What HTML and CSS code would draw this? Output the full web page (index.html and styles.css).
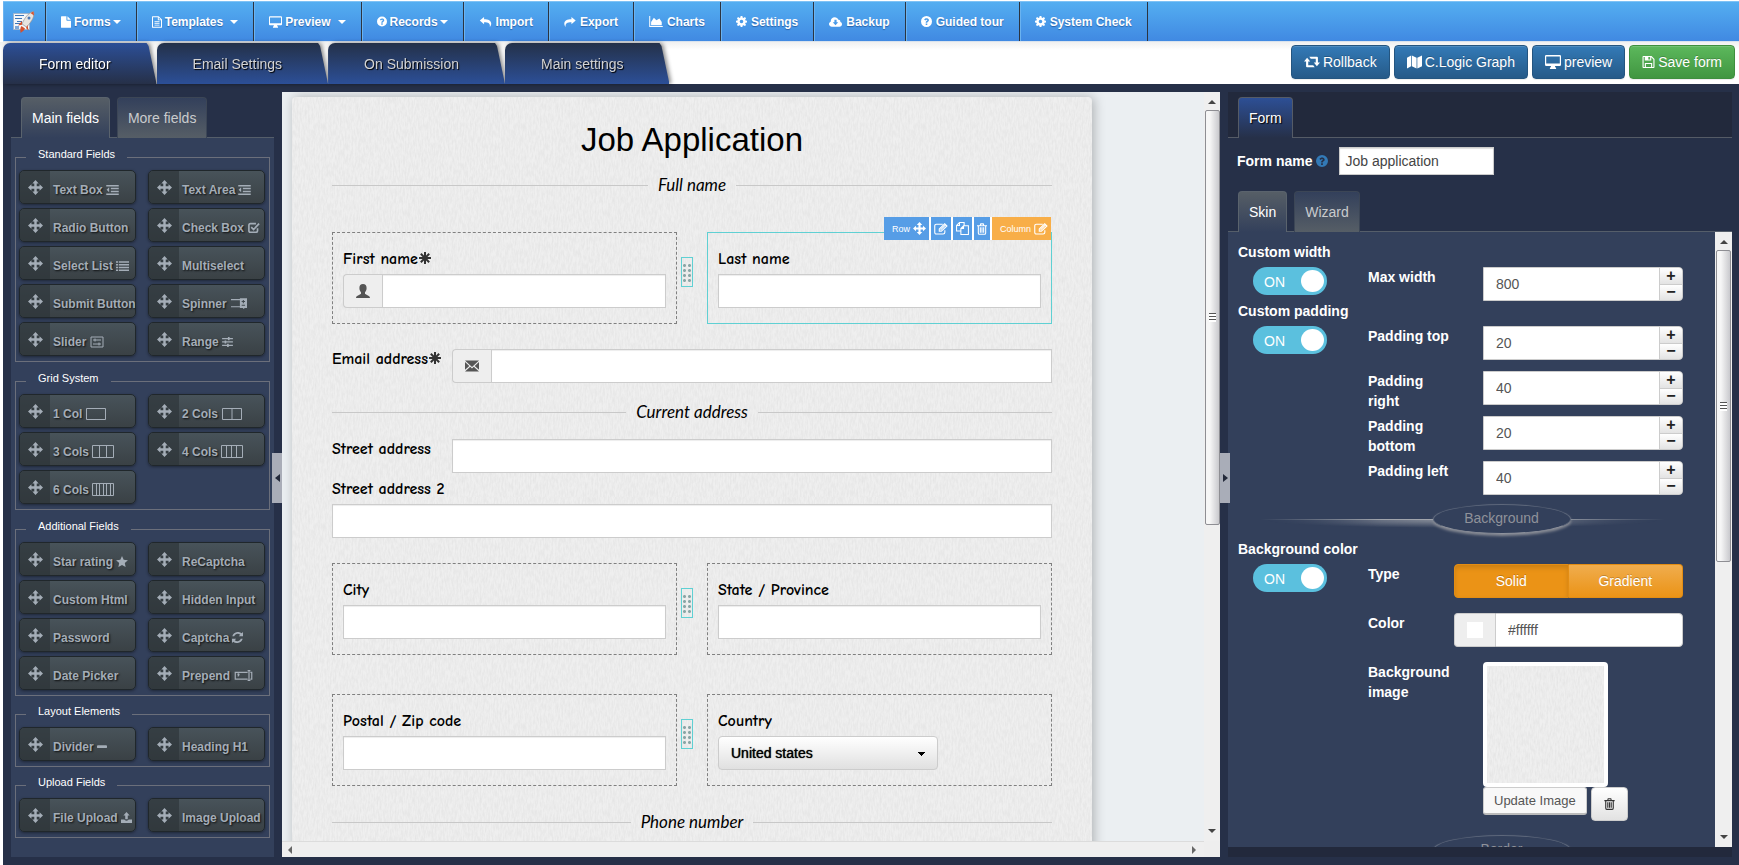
FILE: index.html
```html
<!DOCTYPE html>
<html lang="en">
<head>
<meta charset="utf-8">
<title>Form editor</title>
<link rel="stylesheet" href="styles.css">
</head>
<body>
<svg class="sprite" aria-hidden="true">
  <symbol id="move" viewBox="0 0 16 16"><path d="M8 0l3.400 3.700H9.300v3h3V4.600L16 8l-3.700 3.400V9.300h-3v3h2.100L8 16l-3.400-3.700h2.100v-3h-3v2.100L0 8l3.700-3.400v2.100h3v-3H4.600z"/></symbol>
  <symbol id="file" viewBox="0 0 12 14"><path d="M0 .8Q0 0 .8 0H6.500v4.700q0 .8.8.8H12v7.700q0 .8-.8.8H.8Q0 14 0 13.200zM7.700 0L12 4.400H7.700z"/></symbol>
  <symbol id="filetext" viewBox="0 0 12 14"><path fill-rule="evenodd" d="M.8 0H8l4 4v9.200q0 .8-.8.8H.8Q0 14 0 13.200V.8Q0 0 .8 0zM1.200 1.200v11.600h9.600V5H7V1.200zM8.100 1.500V4h2.400zM3 6.200h6v1H3zm0 2h6v1H3zm0 2h6v1H3z"/></symbol>
  <symbol id="desktop" viewBox="0 0 16 14"><path fill-rule="evenodd" d="M1.200 0h13.600Q16 0 16 1.200v8.600Q16 11 14.800 11H10q0 1 .7 1.500.8.500.3 1.500H5q-.5-1 .3-1.500Q6 12 6 11H1.200Q0 11 0 9.800V1.200Q0 0 1.200 0zM1.200 1.400v7.200h13.600V1.400z"/></symbol>
  <symbol id="question" viewBox="0 0 14 14"><path fill-rule="evenodd" d="M7 0a7 7 0 1 1 0 14A7 7 0 0 1 7 0zM4 4.600l1.500 1.100C6.100 4.900 6.500 4.700 7 4.700c1.100 0 1.400.9.500 1.500C6.500 6.800 6 7.300 6 8.700h2c0-.7.2-.9.900-1.300C11.300 5.900 10 2.800 7.100 2.800 5.800 2.800 4.700 3.400 4 4.600zM6 9.600v2h2v-2z"/></symbol>
  <symbol id="reply" viewBox="0 0 16 14"><path d="M0 5L6 0v3c6 0 10 2 10 6.500 0 1.600-.8 3.300-2 4.500C15 9 12 7.200 6 7.200V10z"/></symbol>
  <symbol id="share" viewBox="0 0 16 14"><path d="M16 5l-6-5v3C4 3 0 5 0 9.500c0 1.600.8 3.300 2 4.500C1 9 4 7.200 10 7.200V10z"/></symbol>
  <symbol id="chart" viewBox="0 0 16 13"><path d="M0 0h1.200v11.800H16V13H0zM2.200 10.800V7L5.500 2l3 3L12 3l2.800 4v3.800z"/></symbol>
  <symbol id="cog" viewBox="0 0 14 14"><path fill-rule="evenodd" d="M5.900 0h2.200l.4 1.900 1.100.5L11.300 1.300l1.500 1.500-1.100 1.700.4 1.100 1.900.4v2.200l-1.900.4-.4 1.100 1.100 1.600-1.500 1.500-1.700-1.100-1.100.5L8.100 14H5.900l-.4-1.800-1.100-.5-1.700 1.100-1.500-1.500 1.100-1.600-.4-1.100L0 8.200V6l1.900-.4.400-1.100L1.200 2.800l1.500-1.500 1.700 1.100 1.100-.5zM7 4.700a2.300 2.300 0 1 0 0 4.600 2.300 2.300 0 0 0 0-4.600z"/></symbol>
  <symbol id="cloud" viewBox="0 0 18 13"><path fill-rule="evenodd" d="M4 13C1.500 13 0 11.400 0 9.400 0 7.800 1 6.600 2.400 6.100 2.200 2.500 4.700 0 8 0c2.300 0 4.200 1.300 5 3.300 2-.3 3.200 1.400 2.700 3.100C17.200 6.900 18 8 18 9.500c0 2-1.500 3.500-3.500 3.500zM7.500 3.500V7H5.200L9 11l3.800-4h-2.300V3.500z"/></symbol>
  <symbol id="retweet" viewBox="0 0 17 12"><path d="M3.300 1.500L6.600 5.500H4.500v4h5.300l1.600 2H3.200q-1 0-1-1v-5H0zM13.700 10.500l-3.300-4h2.100v-4H7.200l-1.600-2h8.200q1 0 1 1v5H17z"/></symbol>
  <symbol id="map" viewBox="0 0 16 14"><path d="M0 2.500L4.400 0v11.500L0 14zM5.200 0l5 2.500V14l-5-2.500zM11 2.500L16 0v11.500L11 14z"/></symbol>
  <symbol id="save" viewBox="0 0 13 13"><path fill-rule="evenodd" d="M1 0h8.800L13 3.200V12q0 1-1 1H1q-1 0-1-1V1q0-1 1-1zM1.200 1.200v10.600H2.500V7.500h8v4.300h1.300v-8L9.500 1.400V5h-7V1.200zM6.300 1.200v2.600h2V1.200zM3.700 8.700v3.100h5.600V8.700z"/></symbol>
  <symbol id="indent" viewBox="0 0 15 12"><path d="M0 0h15v1.800H0zM5.500 3.400H15v1.800H5.500zM5.500 6.800H15v1.800H5.500zM0 10.200h15V12H0zM3.500 2.800v6L.4 5.800z"/></symbol>
  <symbol id="check" viewBox="0 0 15 14"><path fill="none" stroke="currentColor" stroke-width="2.100" d="M12 8v3q0 2-2 2H3q-2 0-2-2V4q0-2 2-2h7M4 6.500l3 3 7-7.500"/></symbol>
  <symbol id="list" viewBox="0 0 16 12"><path d="M0 0h2.500v1.900H0zm3.500 0H16v1.900H3.500zM0 3.400h2.500v1.900H0zm3.500 0H16v1.900H3.500zM0 6.800h2.500v1.900H0zm3.500 0H16v1.900H3.500zM0 10.200h2.500V12H0zm3.500 0H16V12H3.500z"/></symbol>
  <symbol id="spin" viewBox="0 0 18 12"><path d="M0 1h11v1.300H0zM0 9h11v1.300H0z"/><path fill-rule="evenodd" d="M10 0h8v11h-3v1h-1.500v-1H10zm3.300 2v1.300H12v1h1.300v1.300h1.200V4.300h1.300v-1h-1.300V2zM12 7.500v1h3.800v-1z"/></symbol>
  <symbol id="slide" viewBox="0 0 14 12"><path fill="none" stroke="currentColor" d="M1 1h12v10H1zM3 4h8M3 8h8M5 2.500v3M9 6.500v3"/></symbol>
  <symbol id="sliders" viewBox="0 0 13 12"><path d="M0 1.100h13v1.500H0zM0 5.200h13v1.500H0zM0 9.300h13v1.500H0zM7 0h2v3.800H7zM3 4.100h2v3.800H3zM6 8.200h2V12H6z"/></symbol>
  <symbol id="c1" viewBox="0 0 20 12"><path fill="none" stroke="currentColor" d="M.5.500h19v11H.5z"/></symbol>
  <symbol id="c2" viewBox="0 0 20 12"><path fill="none" stroke="currentColor" d="M.5.500h19v11H.5zM10 0v12"/></symbol>
  <symbol id="c3" viewBox="0 0 22 13"><path fill="none" stroke="currentColor" d="M.5.500h21v12H.5zM7.500 0v13M14.500 0v13"/></symbol>
  <symbol id="c4" viewBox="0 0 22 13"><path fill="none" stroke="currentColor" d="M.5.500h21v12H.5zM5.500 0v13M10.500 0v13M15.500 0v13"/></symbol>
  <symbol id="c6" viewBox="0 0 22 13"><path fill="none" stroke="currentColor" d="M.5.500h21v12H.5zM4.500 0v13M7.500 0v13M11.500 0v13M14.500 0v13M18.500 0v13"/></symbol>
  <symbol id="star" viewBox="0 0 14 13"><path d="M7 0l2 4.500 5 .5-3.700 3.300L11.300 13 7 10.500 2.700 13l1-4.700L0 5l5-.5z"/></symbol>
  <symbol id="refresh" viewBox="0 0 14 14"><path d="M12.300 1.700L14 0v5.400H8.600l1.900-1.900C7.600 1 4 2.200 2.800 5.400H.4C1.800 0 8.400-1.700 12.300 1.700zM1.700 12.300L0 14V8.600h5.400l-1.900 1.900c2.900 2.500 6.500 1.300 7.700-1.900h2.400c-1.400 5.400-8 7.100-11.900 3.700z"/></symbol>
  <symbol id="prep" viewBox="0 0 20 12"><path fill="none" stroke="currentColor" stroke-width="1.300" d="M14.500 2.500H1v7.500h13.500M17.500 2.500H19v7.500h-1.500M16 1v10.500M14.500.700h3M14.500 11.300h3M3.500 5q1-1.300 1.600-.2.200.7-.9 1.500v.7"/></symbol>
  <symbol id="minus" viewBox="0 0 11 12"><rect y="4.500" width="11" height="3.200" rx="1"/></symbol>
  <symbol id="upload" viewBox="0 0 13 13"><path d="M6.500 0l3.700 4H8v4.500H5V4H2.800zM0 9h4q.3 1.200 2.500 1.200T9 9h4v4H0z"/></symbol>
  <symbol id="edit" viewBox="0 0 16 14"><path fill="none" stroke="currentColor" stroke-width="1.300" d="M12.500 8.500v2.300q0 2-2 2H2.700q-2 0-2-2V3.500q0-2 2-2H10M6 9.500V7l6.300-6 2.600 2.500L8.500 9.500zM7.500 8L13 2.500"/></symbol>
  <symbol id="copy" viewBox="0 0 16 16"><path fill="none" stroke="currentColor" stroke-width="1.300" d="M10 4V.7H4.300L.7 4.300V11H6M4.300.7v3.600H.7M9.300 4.700h6v10.600H6V8zM9.300 4.700V8H6"/></symbol>
  <symbol id="trash" viewBox="0 0 12 14"><path fill="none" stroke="currentColor" stroke-width="1.300" d="M0 3h12M1.600 3v8.700q0 1.600 1.200 1.600h6.400q1.200 0 1.200-1.600V3M3.800 3l.7-2.200h3L8.200 3M4 5v6.500M6 5v6.500M8 5v6.500"/></symbol>
  <symbol id="user" viewBox="0 0 14 14"><path d="M7 0c2.400 0 3.600 1.400 3.600 4 0 2-.8 3.500-1.600 4.300v1.400c0 .8 5 1.500 5 4.300H0c0-2.800 5-3.500 5-4.300V8.300C4.200 7.500 3.400 6 3.400 4 3.400 1.400 4.600 0 7 0z"/></symbol>
  <symbol id="mail" viewBox="0 0 14 11"><path d="M0 0h14L7 6.500zM0 1.400L4.300 5.400 0 9.300zM14 1.400v7.900L9.700 5.400zM0 11l5.200-4.800L7 7.900l1.800-1.700L14 11z"/></symbol>
  <symbol id="aster" viewBox="0 0 12 12"><path stroke="currentColor" stroke-width="2" d="M6 0v12M0 6h12M1.800 1.800l8.400 8.400M10.200 1.800l-8.400 8.400"/></symbol>
</svg>

<nav class="topbar">
  <a class="brand" href="#" aria-label="Home">
    <svg width="22" height="22" viewBox="0 0 22 22"><path fill="#f4f6f8" stroke="#9fb4cc" d="M.5 2.500h16v16H.5z"/><path stroke="#3d76b8" d="M2 4.500h9M2 7.500h7M4 10.500h5M2 12.500h6"/><path fill="#7da7d8" d="M2 15h4v3H2z"/><path fill="#e8e4e0" stroke="#8d8f96" stroke-width=".7" d="M20.500.500c1.500 4-1 9.500-7 15.500L9 13C11.500 7 15.500 1.500 20.500.5z"/><path fill="#d5502c" d="M20.500.5l.5 4-3.500-2.500zM9 10l-4 4.500 4-.8zM14.500 14l1 5.500-2.500-2.500zM8.500 15l3.500 2.500c-.5 2-3 3-4.500 4.500.3-2-1-4 1-7z"/><circle cx="16" cy="7" r="1.500" fill="#4c78b4"/></svg>
  </a>
  <a class="drop" href="#"><svg width="10" height="12"><use href="#file"/></svg>Forms<i class="caret"></i></a>
  <a class="drop" href="#"><svg width="10" height="12"><use href="#filetext"/></svg>Templates<i class="caret far"></i></a>
  <a class="drop" href="#"><svg width="13" height="12"><use href="#desktop"/></svg>Preview<i class="caret far"></i></a>
  <a class="drop" href="#"><svg width="10" height="11"><use href="#question"/></svg>Records<i class="caret"></i></a>
  <a href="#"><svg width="13" height="10"><use href="#reply"/></svg>Import</a>
  <a href="#"><svg width="12" height="10"><use href="#share"/></svg>Export</a>
  <a href="#"><svg width="14" height="11"><use href="#chart"/></svg>Charts</a>
  <a href="#"><svg width="11" height="11"><use href="#cog"/></svg>Settings</a>
  <a href="#"><svg width="13" height="10"><use href="#cloud"/></svg>Backup</a>
  <a href="#"><svg width="11" height="11"><use href="#question"/></svg>Guided tour</a>
  <a href="#"><svg width="11" height="11"><use href="#cog"/></svg>System Check</a>
</nav>

<header class="tabbar">
  <div class="tabs">
    <div class="tabwrap"><button class="tab active">Form editor</button></div>
    <div class="tabwrap"><button class="tab">Email Settings</button></div>
    <div class="tabwrap"><button class="tab">On Submission</button></div>
    <div class="tabwrap"><button class="tab">Main settings</button></div>
  </div>
  <div class="actions">
    <button class="btn"><svg width="16" height="12"><use href="#retweet"/></svg>Rollback</button>
    <button class="btn"><svg width="15" height="14"><use href="#map"/></svg>C.Logic Graph</button>
    <button class="btn"><svg width="16" height="14"><use href="#desktop"/></svg>preview</button>
    <button class="btn green"><svg width="13" height="12"><use href="#save"/></svg>Save form</button>
  </div>
</header>

<main class="work">
  <aside class="palette">
    <div class="ptabs">
      <button class="ptab active">Main fields</button>
      <button class="ptab">More fields</button>
    </div>
    <div class="pbody">
      <fieldset><legend>Standard Fields</legend>
        <div class="tools">
          <button class="tool"><span class="grip"><svg><use href="#move"/></svg></span><span class="name">Text Box <svg width="13" height="10"><use href="#indent"/></svg></span></button>
          <button class="tool"><span class="grip"><svg><use href="#move"/></svg></span><span class="name">Text Area <svg width="13" height="10"><use href="#indent"/></svg></span></button>
          <button class="tool"><span class="grip"><svg><use href="#move"/></svg></span><span class="name">Radio Button</span></button>
          <button class="tool"><span class="grip"><svg><use href="#move"/></svg></span><span class="name">Check Box<svg class="snug" width="12" height="11"><use href="#check"/></svg></span></button>
          <button class="tool"><span class="grip"><svg><use href="#move"/></svg></span><span class="name">Select List <svg width="13" height="10"><use href="#list"/></svg></span></button>
          <button class="tool"><span class="grip"><svg><use href="#move"/></svg></span><span class="name">Multiselect</span></button>
          <button class="tool"><span class="grip"><svg><use href="#move"/></svg></span><span class="name">Submit Button</span></button>
          <button class="tool"><span class="grip"><svg><use href="#move"/></svg></span><span class="name">Spinner <svg class="snug" width="16" height="11"><use href="#spin"/></svg></span></button>
          <button class="tool"><span class="grip"><svg><use href="#move"/></svg></span><span class="name">Slider <svg class="snug" width="14" height="12"><use href="#slide"/></svg></span></button>
          <button class="tool"><span class="grip"><svg><use href="#move"/></svg></span><span class="name">Range <svg width="11" height="10"><use href="#sliders"/></svg></span></button>
        </div>
      </fieldset>
      <fieldset><legend>Grid System</legend>
        <div class="tools">
          <button class="tool"><span class="grip"><svg><use href="#move"/></svg></span><span class="name">1 Col <svg class="snug" width="20" height="12"><use href="#c1"/></svg></span></button>
          <button class="tool"><span class="grip"><svg><use href="#move"/></svg></span><span class="name">2 Cols <svg class="snug" width="20" height="12"><use href="#c2"/></svg></span></button>
          <button class="tool"><span class="grip"><svg><use href="#move"/></svg></span><span class="name">3 Cols <svg width="22" height="13"><use href="#c3"/></svg></span></button>
          <button class="tool"><span class="grip"><svg><use href="#move"/></svg></span><span class="name">4 Cols <svg width="22" height="13"><use href="#c4"/></svg></span></button>
          <button class="tool"><span class="grip"><svg><use href="#move"/></svg></span><span class="name">6 Cols <svg width="22" height="13"><use href="#c6"/></svg></span></button>
        </div>
      </fieldset>
      <fieldset><legend>Additional Fields</legend>
        <div class="tools">
          <button class="tool"><span class="grip"><svg><use href="#move"/></svg></span><span class="name">Star rating <svg width="12" height="11"><use href="#star"/></svg></span></button>
          <button class="tool"><span class="grip"><svg><use href="#move"/></svg></span><span class="name">ReCaptcha</span></button>
          <button class="tool"><span class="grip"><svg><use href="#move"/></svg></span><span class="name">Custom Html</span></button>
          <button class="tool"><span class="grip"><svg><use href="#move"/></svg></span><span class="name">Hidden Input</span></button>
          <button class="tool"><span class="grip"><svg><use href="#move"/></svg></span><span class="name">Password</span></button>
          <button class="tool"><span class="grip"><svg><use href="#move"/></svg></span><span class="name">Captcha <svg width="11" height="11"><use href="#refresh"/></svg></span></button>
          <button class="tool"><span class="grip"><svg><use href="#move"/></svg></span><span class="name">Date Picker</span></button>
          <button class="tool"><span class="grip"><svg><use href="#move"/></svg></span><span class="name">Prepend <svg class="snug" width="19" height="11"><use href="#prep"/></svg></span></button>
        </div>
      </fieldset>
      <fieldset><legend>Layout Elements</legend>
        <div class="tools">
          <button class="tool"><span class="grip"><svg><use href="#move"/></svg></span><span class="name">Divider <svg width="10" height="11"><use href="#minus"/></svg></span></button>
          <button class="tool"><span class="grip"><svg><use href="#move"/></svg></span><span class="name">Heading H1</span></button>
        </div>
      </fieldset>
      <fieldset><legend>Upload Fields</legend>
        <div class="tools">
          <button class="tool"><span class="grip"><svg><use href="#move"/></svg></span><span class="name">File Upload <svg width="11" height="11"><use href="#upload"/></svg></span></button>
          <button class="tool"><span class="grip"><svg><use href="#move"/></svg></span><span class="name">Image Upload</span></button>
        </div>
      </fieldset>
    </div>
    <button class="fold left" aria-label="Collapse palette"></button>
  </aside>

  <section class="canvas">
    <div class="stage">
      <form class="page">
        <h1>Job Application</h1>
        <h2 class="rule first">Full name</h2>
        <div class="pair">
          <div class="cell">
            <label for="fn">First name<svg class="req" width="12" height="12"><use href="#aster"/></svg></label>
            <div class="group"><span class="addon"><svg width="14" height="14"><use href="#user"/></svg></span><input id="fn" type="text"></div>
          </div>
          <span class="dots"><i></i></span>
          <div class="cell chosen">
            <div class="rowtools">
              <button type="button">Row <svg width="13" height="13"><use href="#move"/></svg></button>
              <button type="button" aria-label="Edit row"><svg width="14" height="12"><use href="#edit"/></svg></button>
              <button type="button" aria-label="Copy row"><svg width="13" height="13"><use href="#copy"/></svg></button>
              <button type="button" aria-label="Delete row"><svg width="10" height="12"><use href="#trash"/></svg></button>
              <button type="button" class="orange">Column <svg width="14" height="12"><use href="#edit"/></svg></button>
            </div>
            <label for="ln">Last name</label>
            <input id="ln" type="text">
          </div>
        </div>
        <div class="line">
          <label for="em">Email address<svg class="req" width="12" height="12"><use href="#aster"/></svg></label>
          <div class="group"><span class="addon"><svg width="14" height="12"><use href="#mail"/></svg></span><input id="em" type="text"></div>
        </div>
        <h2 class="rule">Current address</h2>
        <div class="line">
          <label for="s1">Street address</label>
          <input id="s1" type="text">
        </div>
        <div class="stack">
          <label for="s2">Street address 2</label>
          <input id="s2" type="text">
        </div>
        <div class="pair">
          <div class="cell"><label for="ct">City</label><input id="ct" type="text"></div>
          <span class="dots"><i></i></span>
          <div class="cell"><label for="st">State / Province</label><input id="st" type="text"></div>
        </div>
        <div class="pair">
          <div class="cell"><label for="zp">Postal / Zip code</label><input id="zp" type="text"></div>
          <span class="dots"><i></i></span>
          <div class="cell"><label for="co">Country</label><select id="co"><option>United states</option></select></div>
        </div>
        <h2 class="rule last">Phone number</h2>
      </form>
    </div>
    <div class="vbar"><i class="up"></i><i class="thumb"></i><i class="down"></i></div>
    <div class="hbar"><i class="lt"></i><i class="rt"></i></div>
    <div class="corner"></div>
  </section>

  <aside class="props">
    <button class="fold right" aria-label="Collapse properties"></button>
    <div class="ftabs"><button class="ftab">Form</button></div>
    <div class="fname"><label for="nm">Form name <svg width="12" height="12"><use href="#question"/></svg></label><input id="nm" type="text" value="Job application"></div>
    <div class="ptabs two">
      <button class="ptab active">Skin</button>
      <button class="ptab">Wizard</button>
    </div>
    <div class="skin">
      <div class="skinbody">
        <section class="opt">
          <h3 id="cw">Custom width</h3>
          <label class="switch"><input type="checkbox" checked aria-labelledby="cw"><span>ON</span></label>
          <div class="rows">
            <div class="row"><label for="mw">Max width</label><div class="num"><input id="mw" type="text" value="800"><button aria-label="Increase">+</button><button aria-label="Decrease">−</button></div></div>
          </div>
        </section>
        <section class="opt">
          <h3 id="cp">Custom padding</h3>
          <label class="switch"><input type="checkbox" checked aria-labelledby="cp"><span>ON</span></label>
          <div class="rows tight">
            <div class="row"><label for="pt">Padding top</label><div class="num"><input id="pt" type="text" value="20"><button aria-label="Increase">+</button><button aria-label="Decrease">−</button></div></div>
            <div class="row"><label for="pr">Padding right</label><div class="num"><input id="pr" type="text" value="40"><button aria-label="Increase">+</button><button aria-label="Decrease">−</button></div></div>
            <div class="row"><label for="pb">Padding bottom</label><div class="num"><input id="pb" type="text" value="20"><button aria-label="Increase">+</button><button aria-label="Decrease">−</button></div></div>
            <div class="row"><label for="pl">Padding left</label><div class="num"><input id="pl" type="text" value="40"><button aria-label="Increase">+</button><button aria-label="Decrease">−</button></div></div>
          </div>
        </section>
        <div class="sep"><span>Background</span></div>
        <section class="opt">
          <h3 id="bc">Background color</h3>
          <label class="switch"><input type="checkbox" checked aria-labelledby="bc"><span>ON</span></label>
          <div class="rows wide">
            <div class="row"><span class="cap">Type</span><div class="seg"><button class="on">Solid</button><button>Gradient</button></div></div>
            <div class="row"><label for="cl">Color</label><div class="color"><span class="addon"><i></i></span><input id="cl" type="text" value="#ffffff"></div></div>
            <div class="row"><span class="cap">Background image</span><div class="pic"><div class="thumbnail"></div><div class="picbtns"><button class="upd">Update Image</button><button class="del" aria-label="Delete image"><svg width="11" height="12"><use href="#trash"/></svg></button></div></div></div>
          </div>
        </section>
        <div class="sep next"><span>Border</span></div>
      </div>
      <div class="vbar slim"><i class="up"></i><i class="thumb"></i><i class="down"></i></div>
    </div>
  </aside>
</main>
</body>
</html>
```

FILE: styles.css
```css
*{box-sizing:border-box}
body{margin:0;height:100vh;display:flex;flex-direction:column;background:#fff;font:14px/20px "Liberation Sans",Arial,sans-serif;color:#fff;overflow:hidden}
button,input,select{font:inherit;margin:0}
button{cursor:pointer;padding:0}
svg{fill:currentColor;flex:none;overflow:visible}
.sprite{position:absolute;width:0;height:0}

/* top menu */
.topbar{display:flex;flex:none;height:41px;margin:1px 0 0 3px;background:linear-gradient(#54aef1,#4089e2);border-top:1px solid #7fc2f5;border-bottom:1px solid #d9e3ee}
.topbar a{display:flex;align-items:center;gap:4px;padding:0 15px;border-right:1px solid #2b3440;box-shadow:inset 1px 0 #6bb3f0;color:#fff;font-size:12px;font-weight:bold;text-decoration:none;text-shadow:0 1px 1px #2a62a8}
.topbar .drop{gap:3px}
.topbar .brand{padding:0 10px}
.caret{border:4px solid transparent;border-top-color:currentColor;border-bottom:0;margin-left:-1px}
.caret.far{margin-left:4px}

/* main tabs */
.tabbar{display:flex;flex:none;justify-content:space-between;height:42px;padding:1px 4px 0 3px;background:linear-gradient(#f0f0f0,#fff 8px)}
.tabs{display:flex}
.tabwrap{filter:drop-shadow(2px 0 2px #0007)}
.tab{height:41px;border:0;border-radius:7px 0 0 0;padding:0 46px 0 36px;color:#d3d3d3;background:linear-gradient(#243149,#2c4f97);clip-path:polygon(0 0,calc(100% - 10px) 0,calc(100% - 8px) 3px,100% 100%,0 100%);text-shadow:1px 1px 1px #000}
.tab.active{color:#fff;background:linear-gradient(#2c4f97,#263048)}
.actions{display:flex;gap:4px;padding-top:2px}
.btn{display:flex;align-items:center;gap:3px;height:34px;padding:0 12px;border:1px solid #245580;border-radius:4px;color:#fff;background:linear-gradient(#337ab7,#265a88);text-shadow:0 -1px 0 #0003;box-shadow:inset 0 1px 0 #ffffff26,0 1px 1px #00000013}
.btn.green{border-color:#3e8f3e;background:linear-gradient(#5cb85c,#419641)}

/* workspace */
.work{flex:1;min-height:0;display:flex;margin-left:3px;padding:8px 7px 8px 8px;background:#263048}
.palette{position:relative;flex:none;width:271px;display:flex;flex-direction:column;padding-right:8px}
.ptabs{display:flex;flex:none;gap:7px;height:46px;padding:5px 10px 0;border-bottom:1px solid #555e6a}
.ptab{height:41px;padding:0 10px;border:1px solid #3c4656;border-bottom:0;border-radius:4px 4px 0 0;color:#c9cbcd;background:linear-gradient(#33405b,#565e66)}
.ptab.active{color:#fff;border-color:#5a636d;background:linear-gradient(#565e66,#33405b)}
.pbody{flex:1;min-height:0;padding:11px 4px 0;background:#33405b}
fieldset{margin:0 0 10px;padding:4px 4px 5px 3px;border:1px solid #6b6f7b;min-width:0}
fieldset:nth-of-type(-n+2){margin-bottom:11px}
legend{margin-left:7px;padding:0 12px 6px;font-size:11px;line-height:11px}
.tools{display:grid;grid-template-columns:1fr 1fr;gap:4px 12px}
.tool{display:flex;height:34px;overflow:hidden;border:1px solid #20272b;border-radius:5px;color:#a4adb7;background:linear-gradient(#48535a,#3a4145);box-shadow:0 1px 3px #0006;text-align:left;font-size:12px;font-weight:bold}
.grip{display:flex;align-items:center;justify-content:center;flex:none;width:30px;height:32px;background:#2d3539aa}
.grip svg{width:15px;height:15px}
.name{display:flex;align-items:center;gap:3px;height:32px;padding:5px 0 0 3px;white-space:nowrap;text-shadow:1px 1px 2px #000c}
.name .snug{margin-left:1px}
.fold{position:absolute;top:361px;width:10px;height:50px;border:0;background:#a9adb8;display:flex;align-items:center;justify-content:center}
.fold.left{right:0}
.fold.right{left:0}
.fold::before{content:"";border:4px solid transparent}
.fold.left::before{border-right:5px solid #23293a;border-left:0}
.fold.right::before{border-left:5px solid #23293a;border-right:0}

/* canvas */
.canvas{flex:1;min-width:0;display:grid;grid-template:minmax(0,1fr) 16px/minmax(0,1fr) 16px;background:#ebeff2}
.stage{overflow:hidden;padding:5px 10px 0}
.page,.thumbnail{background:#efefef url("data:image/svg+xml,%3Csvg xmlns='http://www.w3.org/2000/svg' width='200' height='200'%3E%3Cfilter id='n'%3E%3CfeTurbulence type='fractalNoise' baseFrequency='.6 .15' numOctaves='3' stitchTiles='stitch'/%3E%3CfeColorMatrix values='0 0 0 0 0 0 0 0 0 0 0 0 0 0 0 0 0 0 .08 -.026'/%3E%3C/filter%3E%3Crect width='200' height='200' filter='url(%23n)'/%3E%3C/svg%3E")}
.page{position:relative;max-width:800px;height:900px;padding:25px 40px 0;border-radius:4px 4px 0 0;color:#000;box-shadow:2px 0 12px #0004}
.page h1{margin:0 0 17px;text-align:center;font-size:33px;line-height:36px;font-weight:normal}
.page label{display:block;height:20px;font:900 16px/20px "Comic Neue","Comic Sans MS",Lato,sans-serif;margin-bottom:5px;white-space:nowrap}
.req{color:#333;margin-left:1px}
.rule{display:flex;align-items:center;gap:10px;margin:0;font:italic 17px/20px Lato,sans-serif}
.rule::before,.rule::after{content:"";flex:1;border-top:1px solid #c8c8c8}
.rule.first{margin-bottom:37px}
.rule.last{margin-top:-13px}
.page input{display:block;width:100%;height:34px;padding:6px 12px;border:1px solid #ccc;background:#fff;box-shadow:inset 0 1px 1px #00000013;min-width:0}
.group{display:flex;flex:1}
.addon{display:flex;align-items:center;justify-content:center;flex:none;width:39px;border:1px solid #ccc;border-right:0;border-radius:4px 0 0 4px;background:#eee;color:#555}
.pair{display:grid;grid-template-columns:minmax(0,1fr) 30px minmax(0,1fr);margin-bottom:39px}
.cell{position:relative;padding:16px 10px 15px;border:1px dashed #808080}
.cell.chosen{border:1px solid #5fd0d3}
.dots{width:12px;height:30px;margin:25px 0 0 4px;border:1px solid #5fd0d3;padding:5px 0}
.dots i{display:block;height:20px;background:radial-gradient(circle,#8aa6a6 1px,transparent 2px) 0 0/5px 5px}
.rowtools{position:absolute;top:-16px;right:0;display:flex;gap:2px;background:#fff}
.rowtools button{display:flex;align-items:center;gap:3px;height:23px;padding:0 3px;border:0;color:#fff;background:#569de6;font-size:9px}
.rowtools button:first-child{padding-left:8px}
.rowtools .orange{padding-left:8px;background:#f8ae48}
.line{display:flex;margin-bottom:19px}
.line label{width:120px;flex:none}
.pair+.line{margin-top:-14px}
.rule+.line{margin:17px 0 6px}
.stack{margin-bottom:25px}
.page select{display:block;width:220px;height:34px;padding:0 12px;border:1px solid #ccc;border-radius:4px;color:#000;appearance:none;background:linear-gradient(45deg,transparent 50%,#000 50%) 198px 15px/4px 4px no-repeat,linear-gradient(-45deg,transparent 50%,#000 50%) 202px 15px/4px 4px no-repeat,linear-gradient(#fff,#e0e0e0);text-shadow:0 0 1px #000}

/* scroll bars */
.vbar,.hbar{display:flex;align-items:center;justify-content:space-between;background:#efefef}
.vbar{flex-direction:column;padding:8px 0}
.hbar{border-top:1px solid #dcdcdc;padding:0 8px 0 6px}
.corner{background:#eee}
.vbar i,.hbar i{display:block;border:4px solid transparent}
.vbar .up{border-top:0;border-bottom:4px solid #444}
.vbar .down{border-bottom:0;border-top:4px solid #444}
.hbar .lt{border-left:0;border-right:4px solid #666}
.hbar .rt{border-right:0;border-left:4px solid #666}
.vbar .thumb{width:15px;height:415px;margin:6px 0 auto;border:1px solid #8e8e93;border-radius:2px;background:repeating-linear-gradient(#555 0 1px,#fff 1px 3px) center/7px 9px no-repeat,linear-gradient(90deg,#f6f6f6 30%,#c9c9cd)}
.vbar.slim .thumb{height:312px}

/* properties */
.props{position:relative;flex:none;width:512px;padding-left:8px;display:flex;flex-direction:column}
.ftabs{flex:none;height:46px;padding:5px 10px 0;background:#22293c;border-bottom:1px solid #555b66}
.ftab{height:41px;padding:0 10px;border:1px solid #555b66;border-bottom:0;border-radius:4px 4px 0 0;color:#fff;background:linear-gradient(#2d4f95,#263048);text-shadow:1px 1px 1px #000}
.fname{display:flex;flex:none;align-items:center;gap:11px;padding:9px 9px 11px}
.fname label{display:flex;align-items:center;gap:4px;font-weight:bold}
.fname svg{color:#337ab7}
.fname input{width:155px;height:28px;padding:0 5px;border:1px solid #ccc;background:#fff;color:#444;box-shadow:inset 0 1px 1px #0002}
.skin{flex:1;min-height:0;display:flex;border-bottom:10px solid #22293c;background:#33405b}
.skinbody{flex:1;min-width:0;overflow:hidden;padding:10px 32px 0 10px}
.skin .vbar{width:17px;flex:none}
.opt{display:grid;grid-template-columns:130px minmax(0,1fr);row-gap:5px;align-items:start}
.opt h3{grid-column:1/3;margin:0;font-size:14px;line-height:20px}
.switch{position:relative;display:flex;align-items:center;width:74px;height:28px;margin-left:15px;padding:2px 11px 0;border-radius:14px;background:#5bc0de}
.switch input{position:absolute;right:3px;top:3px;width:23px;height:22px;margin:0;appearance:none;border-radius:50%;background:#fff}
.row{display:flex;align-items:flex-start;justify-content:space-between;min-height:34px}
.row>label,.row>.cap{width:85px;font-weight:bold}
.tight .row{min-height:40px;margin-bottom:5px}
.tight .row:last-child{min-height:34px;margin-bottom:0}
.wide .row{margin-bottom:15px}
.num{display:grid;grid-template:1fr 1fr/1fr 22px;gap:1px;width:200px;height:34px;border:1px solid #ccc;border-radius:0 4px 4px 0;overflow:hidden;background:#ccc}
.num input{grid-row:1/3;border:0;padding:0 12px;min-width:0;color:#555;background:#fff}
.num button{border:0;background:linear-gradient(#fff,#e3e3e3);color:#222;font-size:16px;line-height:14px;font-weight:bold}
.sep{display:flex;align-items:center;justify-content:center;height:30px;margin:9px 18px 5px 22px;padding-left:78px;position:relative}
.sep::before{content:"";position:absolute;left:0;right:0;top:15px;height:8px;background:radial-gradient(ellipse at top,#8c919c,transparent 70%);border-top:1px solid #a0a4ac;mask-image:linear-gradient(90deg,transparent,#000 30%,#000 70%,transparent)}
.sep span{position:relative;width:138px;height:30px;border-radius:50%;text-align:center;line-height:26px;color:#8f929a;background:#33405b;border:1px solid #5d677b;border-bottom-color:#8f939d;box-shadow:0 2px 3px #8a8d96}
.seg{display:grid;grid-template-columns:1fr 1fr;width:229px;height:34px}
.seg button{border:1px solid #e38d13;border-left:0;border-radius:0 4px 4px 0;color:#fff;background:linear-gradient(#f0ad4e,#eb9316);text-shadow:0 -1px 0 #0003}
.seg .on{border-left:1px solid #e38d13;border-radius:4px 0 0 4px;background:#eb9316;box-shadow:inset 0 3px 5px #0002}
.color{display:flex;width:229px;height:34px}
.color .addon{width:41px}
.color i{width:16px;height:16px;background:#fff}
.color input{flex:1;min-width:0;border:1px solid #ccc;border-radius:0 4px 4px 0;padding:0 12px;color:#555;background:#fff}
.pic{width:200px}
.thumbnail{width:125px;height:125px;border:4px solid #fff;border-radius:4px}
.picbtns{display:flex;align-items:flex-start;gap:4px}
.upd{height:28px;padding:0 10px;border:1px solid #ccc;border-bottom:2px solid #bbb;border-radius:3px;background:#f8f8f8;color:#555;font-size:13px}
.del{display:flex;align-items:center;justify-content:center;width:37px;height:34px;border:1px solid #ccc;border-radius:4px;background:linear-gradient(#fff,#e2e2e2);color:#333}
.sep.next{margin-top:-1px}
```
